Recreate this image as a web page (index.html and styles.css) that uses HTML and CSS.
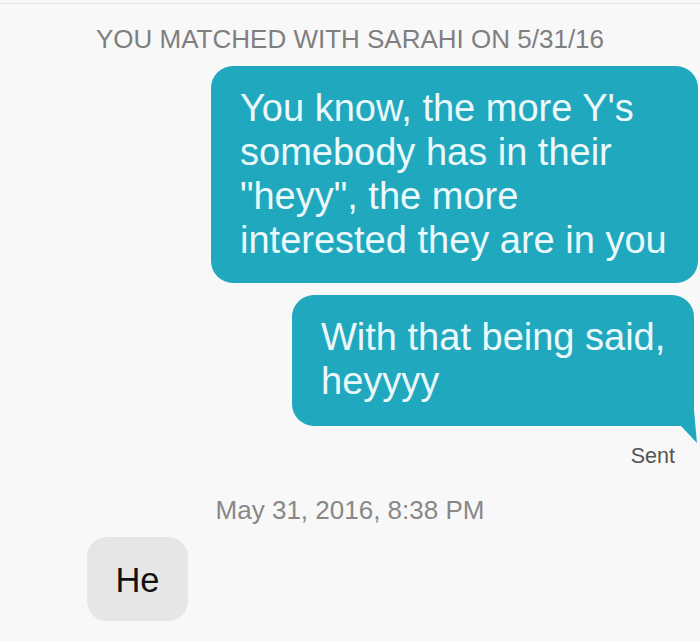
FILE: index.html
```html
<!DOCTYPE html>
<html>
<head>
<meta charset="utf-8">
<link rel="stylesheet" href="styles.css">
</head>
<body>
<div class="screen">
  <div class="matched">YOU MATCHED WITH SARAHI ON 5/31/16</div>
  <div class="thread">
    <div class="row out">
      <div class="bubble sent-bubble first">You know, the more Y's<br>somebody has in their<br>"heyy", the more<br>interested they are in you</div>
    </div>
    <div class="row out">
      <div class="bubble sent-bubble last">With that being said,<br>heyyyy</div>
    </div>
    <div class="status">Sent</div>
    <div class="timestamp">May 31, 2016, 8:38 PM</div>
    <div class="row in">
      <div class="bubble recv-bubble">He</div>
    </div>
  </div>
</div>
</body>
</html>
```
FILE: styles.css
```css
html, body {
  margin: 0;
  padding: 0;
  background: #f8f8f8;
}
.screen {
  width: 700px;
  height: 641px;
  overflow: hidden;
  border-top: 1px solid #e0e0e0;
  margin-top: 3px;
  box-sizing: border-box;
  font-family: "Liberation Sans", Arial, sans-serif;
  display: flex;
  flex-direction: column;
}
.matched {
  padding-top: 20px;
  text-align: center;
  font-size: 26px;
  line-height: 30px;
  color: #7f7f7f;
}
.thread {
  display: flex;
  flex-direction: column;
  margin-top: 12px;
}
.row {
  display: flex;
}
.row.out {
  justify-content: flex-end;
}
.row.in {
  justify-content: flex-start;
  padding-left: 87px;
}
.bubble {
  position: relative;
  box-sizing: border-box;
}
.sent-bubble {
  background: #20a8bf;
  color: #ecf9fb;
  font-size: 38px;
  line-height: 44px;
  border-radius: 22px;
  padding-left: 29px;
  padding-right: 20px;
}
.sent-bubble.first {
  width: 487px;
  margin-right: 2px;
  padding-top: 20px;
  padding-bottom: 21px;
}
.sent-bubble.last {
  width: 402px;
  margin-right: 6px;
  margin-top: 12px;
  padding-top: 20px;
  padding-bottom: 23px;
  border-bottom-right-radius: 6px;
}
.sent-bubble.last::after {
  content: "";
  position: absolute;
  right: -4px;
  bottom: -17px;
  width: 17px;
  height: 34px;
  background: #20a8bf;
  clip-path: polygon(0 0, 76% 0, 94% 100%, 0 50%);
}
.status {
  align-self: flex-end;
  margin-right: 25px;
  margin-top: 17px;
  font-size: 21.5px;
  line-height: 26px;
  color: #555;
}
.timestamp {
  margin-top: 26px;
  text-align: center;
  font-size: 26px;
  line-height: 30px;
  color: #888;
}
.recv-bubble {
  margin-top: 12px;
  background: #e6e6e6;
  color: #111;
  font-size: 34.5px;
  line-height: 40px;
  border-radius: 20px;
  width: 101px;
  height: 84px;
  padding-top: 23px;
  text-align: center;
}
```
